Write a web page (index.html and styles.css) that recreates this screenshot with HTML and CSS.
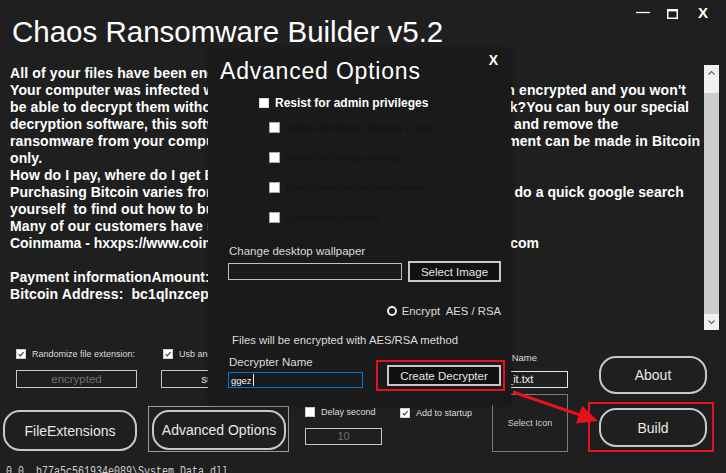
FILE: index.html
```html
<!DOCTYPE html>
<html lang="en">
<head>
<meta charset="utf-8">
<title>Chaos Ransomware Builder v5.2</title>
<link rel="stylesheet" href="styles.css">
</head>
<body>
<div class="app">
  <header class="titlebar">
    <h1 class="title">Chaos Ransomware Builder v5.2</h1>
    <div class="winctl">
      <svg class="wc-min" width="14" height="12" viewBox="0 0 14 12"><path d="M0 5.5H14" stroke="#fff" stroke-width="1.3"/></svg>
      <svg class="wc-max" width="11" height="12" viewBox="0 0 11 12"><rect x="0.75" y="2.75" width="9.5" height="8.5" fill="none" stroke="#fff" stroke-width="1.5"/><path d="M0 3.2H11" stroke="#fff" stroke-width="2.4"/></svg>
      <span class="wc-close">X</span>
    </div>
  </header>

  <div class="notebox">
    <div class="note">
      <div>All of your files have been encrypted</div>
      <div>Your computer was infected with a ransomware virus. Your files have been encrypted and you won't</div>
      <div>be able to decrypt them without our help.What can I do to get my files back?You can buy our special</div>
      <div class="tight">decryption software, this software will allow you to recover all of your data and remove the</div>
      <div>ransomware from your computer.The price for the software is $1,500. Payment can be made in Bitcoin</div>
      <div>only.</div>
      <div>How do I pay, where do I get Bitcoin?</div>
      <div class="tight">Purchasing Bitcoin varies from country to country, you are best advised to do a quick google search</div>
      <div>yourself  to find out how to buy Bitcoin. </div>
      <div>Many of our customers have reported these sites to be fast and reliable:</div>
      <div class="tighter">Coinmama - hxxps://www.coinmama.com Bitpanda - hxxps://www.bitpanda.com</div>
      <div> </div>
      <div>Payment informationAmount: 0.1473766 BTC</div>
      <div>Bitcoin Address:  bc1qlnzcep4l4ac0ttdrq7awxev9ehu465f2vpt9x0</div>
    </div>
    <div class="vscroll">
      <div class="vs-up"><svg width="15" height="16" viewBox="0 0 15 16"><path d="M4.5 9.5L7.5 6.5L10.5 9.5" fill="none" stroke="#606060" stroke-width="1.1"/></svg></div>
      <div class="vs-thumb"></div>
      <div class="vs-down"><svg width="15" height="16" viewBox="0 0 15 16"><path d="M4.5 6.5L7.5 9.5L10.5 6.5" fill="none" stroke="#606060" stroke-width="1.1"/></svg></div>
    </div>
  </div>

  <div class="options">
    <div class="col col1">
      <div class="cb"><span class="box checked"><svg viewBox="0 0 10 10"><path d="M2 5.2L4.2 7.4L8.2 2.6" fill="none" stroke="#3a3a3a" stroke-width="1.4"/></svg></span>Randomize file extension:</div>
      <div class="field muted">encrypted</div>
      <div class="pill pill-ext">FileExtensions</div>
    </div>
    <div class="col col2">
      <div class="cb"><span class="box checked"><svg viewBox="0 0 10 10"><path d="M2 5.2L4.2 7.4L8.2 2.6" fill="none" stroke="#3a3a3a" stroke-width="1.4"/></svg></span>Usb and network spread:</div>
      <div class="field spread">surprise.exe</div>
      <div class="frame"><div class="pill pill-adv">Advanced Options</div></div>
    </div>
    <div class="col col3">
      <div class="cb"><span class="box"></span>Delay second</div>
      <div class="field muted small">10</div>
    </div>
    <div class="col col4">
      <div class="cb"><span class="box checked"><svg viewBox="0 0 10 10"><path d="M2 5.2L4.2 7.4L8.2 2.6" fill="none" stroke="#3a3a3a" stroke-width="1.4"/></svg></span>Add to startup</div>
    </div>
    <div class="col col5">
      <div class="lbl-name">Droped file Name</div>
      <div class="field name">read_it.txt</div>
      <div class="iconpick">Select Icon</div>
    </div>
    <div class="col col6">
      <div class="pill pill-about">About</div>
      <div class="redbox redbox-build"><div class="pill pill-build">Build</div></div>
    </div>
  </div>

  <div class="console"><span class="console-line">4.0.0.0__b77a5c561934e089\System.Data.dll</span></div>

  <section class="modal">
    <div class="m-head">
      <h2 class="m-title">Advanced Options</h2>
      <span class="m-close">X</span>
    </div>
    <div class="m-resist"><span class="box"></span>Resist for admin privileges</div>
    <ul class="m-subs">
      <li><span class="box"></span>Delete all Volumes Shadow Copies</li>
      <li><span class="box"></span>Delete the backup catalog</li>
      <li><span class="box"></span>Disable windows recovery mode</li>
      <li><span class="box"></span>Disable task manager</li>
    </ul>
    <div class="m-label">Change desktop wallpaper</div>
    <div class="m-row">
      <div class="m-input m-input-wall"></div>
      <div class="m-btn m-btn-img">Select Image</div>
    </div>
    <div class="m-radio"><span class="radio"></span>Encrypt  AES / RSA</div>
    <div class="m-note">Files will be encrypted with AES/RSA method</div>
    <div class="m-dec">
      <div class="m-dec-col">
        <div class="m-label m-label-dec">Decrypter Name</div>
        <div class="m-input m-input-dec">ggez<span class="caret"></span></div>
      </div>
      <div class="redbox redbox-dec"><div class="m-btn m-btn-dec">Create Decrypter</div></div>
    </div>
  </section>

  <svg class="annot" width="726" height="473" viewBox="0 0 726 473">
    <line x1="513" y1="392" x2="583" y2="416" stroke="#e8101a" stroke-width="3"/>
    <polygon points="598,421 582,405.5 576,423.5" fill="#e8101a"/>
  </svg>
</div>
</body>
</html>
```

FILE: styles.css
```css
* { box-sizing: border-box; margin: 0; padding: 0; }
html, body { width: 726px; height: 473px; overflow: hidden; background: #1f1f1f; }
body { font-family: "Liberation Sans", Arial, sans-serif; color: #fff; }

.app { position: relative; width: 726px; height: 473px; overflow: hidden; }

/* title bar */
.titlebar { display: flex; justify-content: space-between; align-items: flex-start; height: 65px; }
.title { font-size: 29.5px; font-weight: 400; line-height: 30px; margin: 17px 0 0 12px; white-space: nowrap; color: #fff; }
.winctl { display: flex; align-items: flex-start; margin: 5px 18px 0 0; }
.wc-min { margin-top: 2px; }
.wc-max { margin: 2px 0 0 17px; }
.wc-close { margin-left: 20px; font-size: 15px; font-weight: 700; line-height: 15px; }

/* ransom note box */
.notebox { display: flex; margin-left: 8px; width: 711px; height: 265px; }
.note { flex: 1; padding-left: 2px; font-size: 14px; font-weight: 700; line-height: 17px; letter-spacing: 0.12px; overflow: hidden; color: #fff; }
.note div { height: 17px; white-space: pre; }
.note .tight { letter-spacing: 0.05px; }
.note .tighter { letter-spacing: -0.03px; }
.vscroll { width: 15px; display: flex; flex-direction: column; background: #f0f0f0; }
.vs-up { height: 28px; }
.vs-up svg { display: block; }
.vs-thumb { flex: 1; background: #cdcdcd; }
.vs-down { height: 16px; }
.vs-down svg { display: block; }

/* bottom options */
.options { display: flex; align-items: flex-start; height: 128px; }
.col { flex: none; display: flex; flex-direction: column; align-items: flex-start; }
.col1 { margin-left: 3px; width: 134px; }
.col2 { margin-left: 11px; width: 141px; }
.col3 { margin-left: 16px; width: 77px; }
.col4 { margin-left: 18px; width: 55px; }
.col5 { width: 113px; }
.col6 { margin-left: 20px; width: 126px; }

.cb { display: flex; align-items: center; height: 10px; font-size: 9px; line-height: 10px; color: #dcdcdc; white-space: nowrap; }
.box { flex: none; display: block; width: 10px; height: 10px; margin-right: 6px; background: #fff; border: 1px solid #cfcfcf; }
.box svg { display: block; width: 8px; height: 8px; }
.col1 .cb { margin: 19px 0 0 13px; }
.col2 .cb { margin: 19px 0 0 15px; }
.col3 .cb { margin-top: 77px; }
.col4 .cb { margin-top: 78px; }

.field { height: 18px; border: 1px solid #c8c8c8; background: #1f1f1f; font-size: 11.5px; line-height: 16px; text-align: center; white-space: nowrap; overflow: hidden; }
.field.muted { color: #707070; }
.col1 .field { margin: 11px 0 0 13px; width: 121px; }
.col2 .field { margin: 11px 0 0 13px; width: 121px; color: #e0e0e0; padding-left: 22px; }
.col3 .field { margin-top: 11px; width: 77px; height: 17px; font-size: 11px; line-height: 15px; }

.pill { display: flex; align-items: center; justify-content: center; border: 2px solid #c8c8c8; border-radius: 17px; font-size: 14px; color: #e8e8e8; white-space: nowrap; }
.pill-ext { margin-top: 22px; width: 134px; height: 41px; }
.frame { margin-top: 18px; width: 141px; height: 46px; border: 1px solid #9b9b9b; padding: 3px 2px 1px 3px; }
.pill-adv { width: 134px; height: 40px; }

.lbl-name { width: 113px; margin-top: 21px; padding-right: 31px; font-size: 9.5px; line-height: 14px; text-align: right; color: #dcdcdc; white-space: nowrap; }
.field.name { margin-top: 6px; width: 113px; height: 17px; border-color: #e6e6e6; text-align: left; padding-left: 29px; font-size: 11px; line-height: 15px; color: #f0f0f0; }
.iconpick { margin: 6px 0 0 37px; width: 76px; height: 58px; border: 1px solid #7c7c7c; display: flex; align-items: center; justify-content: center; font-size: 9px; color: #d0d0d0; }

.pill-about { margin: 26px 0 0 11px; width: 108px; height: 38px; }
.redbox { border: 2px solid #e8101a; }
.redbox-build { margin-top: 8px; padding: 4px 5px 3px 9px; }
.pill-build { width: 108px; height: 39px; }

/* console line */
.console { height: 15px; overflow: hidden; }
.console-line { display: inline-block; margin: 4px 0 0 -18px; font-family: "Liberation Mono", "DejaVu Sans Mono", monospace; font-size: 10px; line-height: 11px; color: #cfcfcf; transform: scaleY(1.35); transform-origin: 0 0; white-space: pre; }

/* advanced options dialog */
.modal { position: absolute; left: 209px; top: 49px; width: 302px; height: 356px; background: #1a1a1a; box-shadow: -1px 0 0 #161616, 0 0 4px rgba(0,0,0,0.4); }
.m-head { display: flex; justify-content: space-between; align-items: flex-start; }
.m-title { font-size: 23px; font-weight: 400; line-height: 24px; letter-spacing: 0.8px; margin: 10px 0 0 11px; color: #fff; white-space: nowrap; }
.m-close { font-size: 14px; font-weight: 700; line-height: 14px; margin: 4px 13px 0 0; }
.m-resist { display: flex; align-items: center; height: 10px; margin: 15px 0 0 50px; font-size: 12px; font-weight: 700; line-height: 12px; white-space: nowrap; }
.m-resist .box { border-color: #e0e0e0; }
.m-subs { list-style: none; margin: 14px 0 0 60px; }
.m-subs li { display: flex; align-items: center; height: 11px; font-size: 9.6px; line-height: 11px; color: #121212; white-space: nowrap; }
.m-subs li + li { margin-top: 19px; }
.m-subs .box { width: 11px; height: 11px; border-color: #a8a8a8; }
.m-label { margin: 21px 0 0 20px; font-size: 11.5px; line-height: 14px; color: #dcdcdc; white-space: nowrap; }
.m-row { display: flex; align-items: center; height: 21px; margin: 3px 0 0 19px; }
.m-input { height: 17px; border: 1px solid #c0c0c0; background: #1a1a1a; }
.m-input-wall { width: 174px; }
.m-btn { display: flex; align-items: center; justify-content: center; border: 2px solid #c8c8c8; background: #111; font-size: 11.5px; color: #e6e6e6; white-space: nowrap; }
.m-btn-img { margin-left: 6px; width: 93px; height: 21px; }
.m-radio { display: flex; align-items: center; justify-content: flex-end; height: 10px; margin: 24px 10px 0 0; font-size: 11.3px; line-height: 14px; color: #dcdcdc; white-space: pre; }
.radio { flex: none; width: 10px; height: 10px; margin-right: 5px; border: 2px solid #ececec; border-radius: 50%; background: #1a1a1a; }
.m-note { margin: 17px 0 0 23px; font-size: 11.3px; line-height: 14px; color: #dcdcdc; white-space: nowrap; }
.m-dec { display: flex; align-items: flex-start; margin: 8px 0 0 19px; }
.m-dec-col { width: 135px; }
.m-label-dec { margin: 0 0 0 1px; }
.m-input-dec { margin-top: 3px; width: 135px; height: 16px; border-color: #0078d7; display: flex; align-items: center; padding-left: 2px; font-size: 9.5px; color: #f0f0f0; }
.caret { display: block; width: 1px; height: 12px; background: #f0f0f0; margin-left: 1px; }
.redbox-dec { margin: 5px 0 0 13px; padding: 3px 2px 3px 9px; }
.m-btn-dec { width: 114px; height: 21px; }

/* annotation arrow */
.annot { position: absolute; left: 0; top: 0; pointer-events: none; }
```
